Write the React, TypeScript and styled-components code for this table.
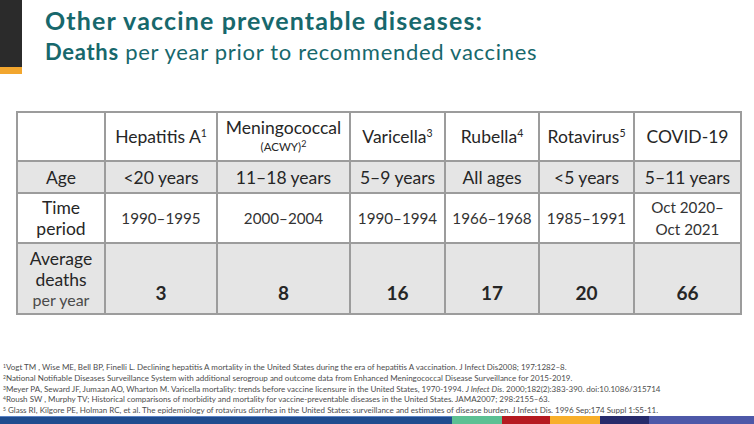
import styled, { createGlobalStyle } from "styled-components";

const Global = createGlobalStyle`
  html, body {
    margin: 0;
    padding: 0;
    background: #ffffff;
  }
  body {
    font-family: Lato, "Open Sans", sans-serif;
  }
`;

const Page = styled.div`
  width: 754px;
  height: 424px;
  display: flex;
  flex-direction: column;
  background: #fff;
  overflow: hidden;
`;

const Header = styled.header`
  display: flex;
  height: 111px;
`;

const Accent = styled.div`
  width: 22px;
  display: flex;
  flex-direction: column;
`;

const AccentDark = styled.div`
  height: 67px;
  background: #2b2b2b;
`;

const AccentStripe = styled.div`
  height: 7px;
  background: #f2a62e;
`;

const Titles = styled.div`
  margin-left: 23px;
  padding-top: 5px;
  color: #17686c;
`;

const Title = styled.h1`
  margin: 0;
  font-size: 25px;
  line-height: 30px;
  font-weight: 700;
  letter-spacing: 1.15px;
`;

const Subtitle = styled.h2`
  margin: 3px 0 0;
  font-size: 22px;
  line-height: 28px;
  font-weight: 400;
  letter-spacing: 0.7px;

  b {
    font-weight: 700;
  }
`;

const Table = styled.table`
  margin-left: 16px;
  width: 724px;
  border-collapse: collapse;
  table-layout: fixed;
  color: #262626;
  border: 2px solid #9c9c9c;
`;

const Cell = styled.td<{ $shade?: boolean; $bottom?: boolean }>`
  border: 2px solid #9c9c9c;
  text-align: center;
  vertical-align: ${(p) => (p.$bottom ? "bottom" : "middle")};
  padding: ${(p) => (p.$bottom ? "0 0 9px" : "0")};
  background: ${(p) => (p.$shade ? "#e5e5e5" : "#ffffff")};
  font-size: 17.5px;
  line-height: 21px;
`;

const Row = styled.tr<{ $h: number }>`
  height: ${(p) => p.$h}px;
`;

const Disease = styled.span`
  font-size: 17.5px;
`;

const Sup = styled.sup`
  font-size: 10.5px;
  line-height: 0;
  vertical-align: 6px;
`;

const SmallSup = styled.sup`
  font-size: 9px;
  line-height: 0;
  vertical-align: 4px;
`;

const Small = styled.div`
  font-size: 11.5px;
  line-height: 18px;
`;

const RowLabel = styled.div`
  font-size: 17.5px;
  line-height: 21px;
`;

const LabelNote = styled.div`
  font-size: 16px;
  line-height: 20px;
  color: #4a4a4a;
`;

const Period = styled.div`
  font-size: 15.2px;
  line-height: 22px;
  color: #333;
`;

const Age = styled.span`
  font-size: 17.5px;
`;

const Deaths = styled.span`
  font-size: 19px;
  font-weight: 700;
`;

const Notes = styled.div`
  margin-top: auto;
  padding: 0 0 0 3px;
  color: #4d4d4d;
  font-size: 8px;
  line-height: 10.8px;
  white-space: nowrap;

  i {
    font-style: italic;
  }
`;

const NoteNum = styled.sup`
  font-size: 5px;
  line-height: 0;
  vertical-align: 2px;
`;

const Bar = styled.div`
  height: 8px;
  display: grid;
  grid-template-columns: 452px 50px 48px 50px 49px 1fr;
`;

const Segment = styled.div<{ $c: string; $top?: string }>`
  background: ${(p) => p.$c};
  border-top: 1px solid ${(p) => p.$top ?? p.$c};
`;

const diseases = [
  { name: "Hepatitis A", n: "1" },
  { name: "Meningococcal", n: "2", extra: "(ACWY)" },
  { name: "Varicella", n: "3" },
  { name: "Rubella", n: "4" },
  { name: "Rotavirus", n: "5" },
  { name: "COVID-19" },
];

const ages = ["<20 years", "11–18 years", "5–9 years", "All ages", "<5 years", "5–11 years"];
const periods = ["1990–1995", "2000–2004", "1990–1994", "1966–1968", "1985–1991", "Oct 2020–\nOct 2021"];
const deaths = ["3", "8", "16", "17", "20", "66"];
const widths = [88, 112, 133, 95, 94, 95, 107];

export default function App() {
  return (
    <Page>
      <Global />
      <Header>
        <Accent>
          <AccentDark />
          <AccentStripe />
        </Accent>
        <Titles>
          <Title>Other vaccine preventable diseases:</Title>
          <Subtitle>
            <b>Deaths</b> per year prior to recommended vaccines
          </Subtitle>
        </Titles>
      </Header>

      <Table>
        <colgroup>
          {widths.map((w, i) => (
            <col key={i} style={{ width: w }} />
          ))}
        </colgroup>
        <tbody>
          <Row $h={49}>
            <Cell />
            {diseases.map((d) =>
              d.extra ? (
                <Cell key={d.name}>
                  <Disease>{d.name}</Disease>
                  <Small>
                    {d.extra}
                    <SmallSup>{d.n}</SmallSup>
                  </Small>
                </Cell>
              ) : (
                <Cell key={d.name}>
                  <Disease>
                    {d.name}
                    {d.n && <Sup>{d.n}</Sup>}
                  </Disease>
                </Cell>
              )
            )}
          </Row>
          <Row $h={32}>
            <Cell $shade>
              <RowLabel>Age</RowLabel>
            </Cell>
            {ages.map((a) => (
              <Cell $shade key={a}>
                <Age>{a}</Age>
              </Cell>
            ))}
          </Row>
          <Row $h={50}>
            <Cell>
              <RowLabel>
                Time
                <br />
                period
              </RowLabel>
            </Cell>
            {periods.map((p) => (
              <Cell key={p}>
                {p.split("\n").map((line) => (
                  <Period key={line}>{line}</Period>
                ))}
              </Cell>
            ))}
          </Row>
          <Row $h={71}>
            <Cell $shade>
              <RowLabel>Average</RowLabel>
              <RowLabel>deaths</RowLabel>
              <LabelNote>per year</LabelNote>
            </Cell>
            {deaths.map((d) => (
              <Cell $shade $bottom key={d}>
                <Deaths>{d}</Deaths>
              </Cell>
            ))}
          </Row>
        </tbody>
      </Table>

      <Notes>
        <div>
          <NoteNum>1</NoteNum>Vogt TM , Wise ME, Bell BP, Finelli L. Declining hepatitis A mortality in the United
          States during the era of hepatitis A vaccination. J Infect Dis2008; 197:1282–8.
        </div>
        <div>
          <NoteNum>2</NoteNum>National Notifiable Diseases Surveillance System with additional serogroup and outcome
          data from Enhanced Meningococcal Disease Surveillance for 2015-2019.
        </div>
        <div>
          <NoteNum>3</NoteNum>Meyer PA, Seward JF, Jumaan AO, Wharton M. Varicella mortality: trends before vaccine
          licensure in the United States, 1970-1994. <i>J Infect Dis</i>. 2000;182(2):383-390. doi:10.1086/315714
        </div>
        <div>
          <NoteNum>4</NoteNum>Roush SW , Murphy TV; Historical comparisons of morbidity and mortality for
          vaccine-preventable diseases in the United States. JAMA2007; 298:2155–63.
        </div>
        <div>
          <NoteNum>5</NoteNum> Glass RI, Kilgore PE, Holman RC, et al. The epidemiology of rotavirus diarrhea in the
          United States: surveillance and estimates of disease burden. J Infect Dis. 1996 Sep;174 Suppl 1:S5-11.
        </div>
      </Notes>

      <Bar>
        <Segment $c="#1f4c8e" $top="#5b82c4" />
        <Segment $c="#5cc093" />
        <Segment $c="#b51a20" />
        <Segment $c="#f8af2b" />
        <Segment $c="#272b6b" />
        <Segment $c="#4d58a8" />
      </Bar>
    </Page>
  );
}
